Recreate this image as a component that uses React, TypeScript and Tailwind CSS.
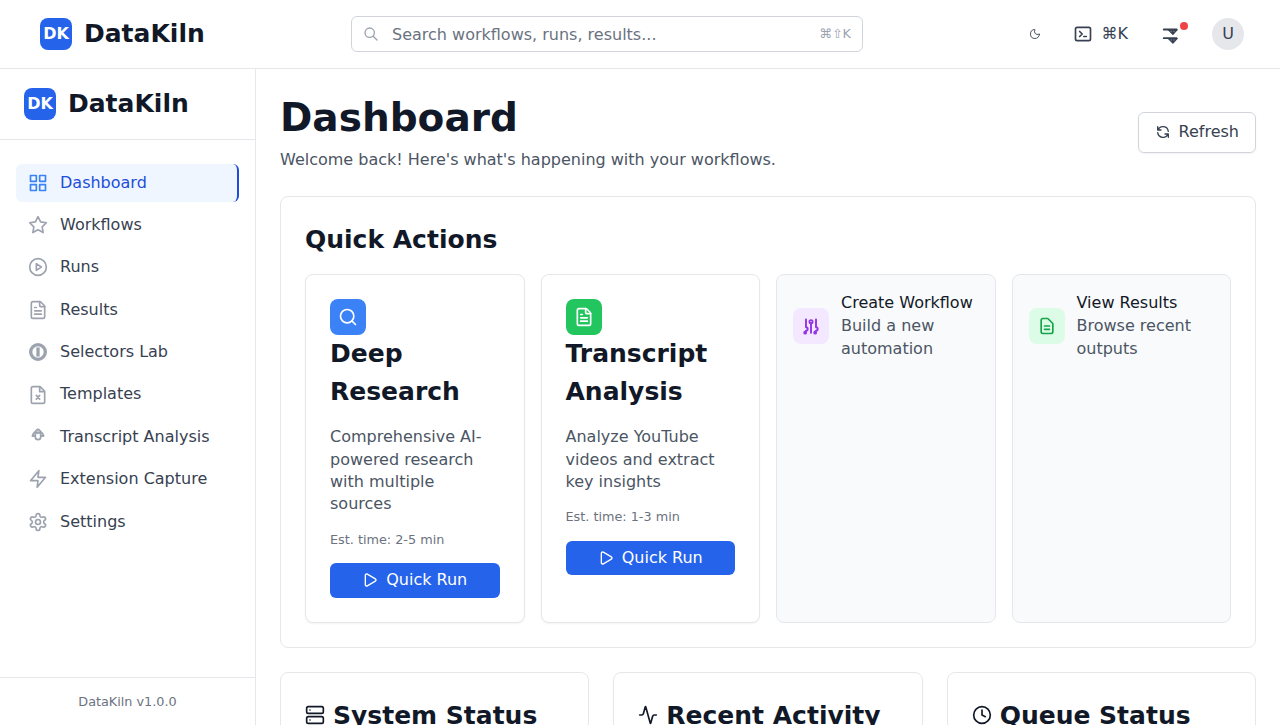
import type { ReactNode } from 'react';
import { Activity, Clock, FileText, Moon, Play, Search, Server } from 'lucide-react';

function Svg({ children, size = 20, sw = 2 }: { children: ReactNode; size?: number; sw?: number }) {
  return (
    <svg width={size} height={size} viewBox="0 0 24 24" fill="none" stroke="currentColor" strokeWidth={sw} strokeLinecap="round" strokeLinejoin="round" className="shrink-0">
      {children}
    </svg>
  );
}

const GridIcon = () => (
  <Svg>
    <path d="M3 3h7v7H3zM14 3h7v7h-7zM14 14h7v7h-7zM3 14h7v7H3z" />
  </Svg>
);
const StarIcon = () => (
  <Svg>
    <path d="M12 2l3.09 6.26L22 9.27l-5 4.87 1.18 6.88L12 17.77l-6.18 3.25L7 14.14 2 9.27l6.91-1.01z" />
  </Svg>
);
const RunsIcon = () => (
  <Svg>
    <circle cx="12" cy="12" r="10" />
    <path d="M10 8l6 4-6 4z" />
  </Svg>
);
const SelectorIcon = () => (
  <Svg>
    <circle cx="12" cy="12" r="8.8" strokeWidth="4" />
    <path d="M12 6.500v11" strokeWidth="4" strokeLinecap="butt" />
  </Svg>
);
const TemplateIcon = () => (
  <Svg>
    <path d="M14.5 2H6a2 2 0 0 0-2 2v16a2 2 0 0 0 2 2h12a2 2 0 0 0 2-2V7.5zM14 2v6h6M10 12.500l4 4.500M14 12.500l-4 4.500" />
  </Svg>
);
const TranscriptIcon = () => (
  <Svg>
    <path d="M8.300 7.500c0-3.500 1.500-5.200 3.700-5.200s3.700 1.700 3.700 5.200z" fill="currentColor" strokeWidth="1" />
    <path d="M8.500 6c-1.800 1.200-2.900 2.700-3.200 4.700h2.200M15.500 6c1.800 1.200 2.900 2.700 3.200 4.700h-2.200" strokeWidth="2.300" />
    <path d="M8.800 8v4a3.200 3.200 0 0 0 6.400 0V8" />
    <path d="M10.500 5h3" stroke="#ffffff" strokeWidth="0.700" />
  </Svg>
);
const ZapIcon = () => (
  <Svg>
    <path d="M13 2L3 14h9l-1 8 10-12h-9z" />
  </Svg>
);
const SettingsIcon = () => (
  <Svg>
    <path d="M12.22 2h-.44a2 2 0 0 0-2 2v.18a2 2 0 0 1-1 1.73l-.43.25a2 2 0 0 1-2 0l-.15-.08a2 2 0 0 0-2.73.73l-.22.38a2 2 0 0 0 .73 2.73l.15.1a2 2 0 0 1 1 1.72v.51a2 2 0 0 1-1 1.74l-.15.09a2 2 0 0 0-.73 2.73l.22.38a2 2 0 0 0 2.73.73l.15-.08a2 2 0 0 1 2 0l.43.25a2 2 0 0 1 1 1.73V20a2 2 0 0 0 2 2h.44a2 2 0 0 0 2-2v-.18a2 2 0 0 1 1-1.73l.43-.25a2 2 0 0 1 2 0l.15.08a2 2 0 0 0 2.73-.73l.22-.39a2 2 0 0 0-.73-2.73l-.15-.08a2 2 0 0 1-1-1.74v-.5a2 2 0 0 1 1-1.74l.15-.09a2 2 0 0 0 .73-2.73l-.22-.38a2 2 0 0 0-2.73-.73l-.15.08a2 2 0 0 1-2 0l-.43-.25a2 2 0 0 1-1-1.73V4a2 2 0 0 0-2-2z" />
    <circle cx="12" cy="12" r="3" />
  </Svg>
);
const FieldSearchIcon = () => (
  <Svg size={16}>
    <path d="M21 21l-6-6m2-5a7 7 0 11-14 0 7 7 0 0114 0z" />
  </Svg>
);
const RefreshIcon = () => (
  <Svg size={16}>
    <path d="M4 4v5h.582m15.356 2A8.001 8.001 0 004.582 9m0 0H9m11 11v-5h-.581m0 0a8.003 8.003 0 01-15.357-2m15.357 2H15" />
  </Svg>
);
const TerminalIcon = () => (
  <Svg>
    <path d="M8 9l3 3-3 3m5 0h3M5 20h14a2 2 0 002-2V6a2 2 0 00-2-2H5a2 2 0 00-2 2v12a2 2 0 002 2z" />
  </Svg>
);
const NotificationIcon = () => (
  <Svg>
    <path d="M4.500 6.600h15.500M4.500 17h15.500" strokeWidth="2.200" />
    <path d="M10 7h10.500l-5 5.500zM10 17.400h10.500l-5 5.500z" strokeWidth="1.400" fill="currentColor" />
    <path d="M13.400 8.800h.01M16.800 8.800h.01M13.400 19.200h.01M16.800 19.200h.01" stroke="#ffffff" strokeWidth="0.800" />
  </Svg>
);
const SlidersIcon = () => (
  <Svg>
    <path d="M6 4v9.500M6 13.500a2 2 0 1 1 0 4L5 20M12 8v12M18 4v9.500M18 13.500a2 2 0 1 1 0 4L17 20" strokeWidth="2.300" />
    <circle cx="12" cy="7" r="2" />
    <circle cx="5" cy="20" r="1" strokeWidth="2.500" />
    <circle cx="17" cy="20" r="1" strokeWidth="2.500" />
  </Svg>
);
const DocumentIcon = () => (
  <Svg>
    <path d="M9 12h6m-6 4h6m2 5H7a2 2 0 01-2-2V5a2 2 0 012-2h5.586a1 1 0 01.707.293l5.414 5.414a1 1 0 01.293.707V19a2 2 0 01-2 2z" />
  </Svg>
);

const navItems: { label: string; icon: ReactNode; active?: boolean }[] = [
  { label: 'Dashboard', icon: <GridIcon />, active: true },
  { label: 'Workflows', icon: <StarIcon /> },
  { label: 'Runs', icon: <RunsIcon /> },
  { label: 'Results', icon: <FileText size={20} /> },
  { label: 'Selectors Lab', icon: <SelectorIcon /> },
  { label: 'Templates', icon: <TemplateIcon /> },
  { label: 'Transcript Analysis', icon: <TranscriptIcon /> },
  { label: 'Extension Capture', icon: <ZapIcon /> },
  { label: 'Settings', icon: <SettingsIcon /> },
];

function Brand() {
  return (
    <div className="flex items-center gap-3">
      <div className="flex size-8 items-center justify-center rounded-lg bg-[#2563eb] font-bold text-white">DK</div>
      <span className="text-[25px] leading-[37.5px] font-bold">DataKiln</span>
    </div>
  );
}

function RunCard({ icon, tint, title, text, time }: { icon: ReactNode; tint: string; title: string; text: string; time: string }) {
  return (
    <article className="rounded-lg border border-[#e5e7eb] bg-white p-6 shadow-[0_1px_2px_rgba(0,0,0,0.05)]">
      <div className={`flex size-9 items-center justify-center rounded-lg text-white ${tint}`}>{icon}</div>
      <h3 className="mb-[15.800px] text-[25px] leading-[37.5px] font-bold">{title}</h3>
      <p className="mb-[15.100px] text-[#4b5563]">{text}</p>
      <p className="mb-[14.400px] text-[12.8px] leading-[18px] text-[#6b7280]">{time}</p>
      <button className="flex w-full items-center justify-center gap-2 rounded-md bg-[#2563eb] py-1.5 text-white">
        <Play size={16} />
        Quick Run
      </button>
    </article>
  );
}

function LinkCard({ icon, tint, title, text }: { icon: ReactNode; tint: string; title: string; text: string }) {
  return (
    <article className="rounded-lg border border-[#e5e7eb] bg-[#f9fafb] p-4">
      <div className="flex items-center gap-3">
        <div className={`flex size-9 shrink-0 items-center justify-center rounded-lg ${tint}`}>{icon}</div>
        <div>
          <p className="mb-[1.100px] pt-[0.500px] whitespace-nowrap">{title}</p>
          <p className="text-[#4b5563]">{text}</p>
        </div>
      </div>
    </article>
  );
}

function StatusCard({ icon, title }: { icon: ReactNode; title: string }) {
  return (
    <section className="h-[200px] rounded-lg border border-[#e5e7eb] bg-white p-6">
      <h2 className="flex items-center gap-2 text-[25px] leading-[37.5px] font-bold">
        {icon}
        {title}
      </h2>
    </section>
  );
}

export default function App() {
  return (
    <div className="flex h-[725px] flex-col overflow-hidden bg-white font-['DejaVu_Sans',sans-serif] text-base leading-[22.4px] text-[#111827]">
      <header className="flex h-[69px] shrink-0 items-center justify-between border-b border-[#e5e7eb] pr-9 pl-10">
        <div className="w-[311px] shrink-0">
          <Brand />
        </div>
        <div className="flex h-9 w-[512px] shrink-0 items-center rounded-md border border-[#d1d5db] pr-[11px] pl-[11px]">
          <span className="text-[#9ca3af]">
            <FieldSearchIcon />
          </span>
          <span className="ml-[13px] flex-1 pt-0.5 text-[#6b7280]">Search workflows, runs, results...</span>
          <span className="text-[12.8px] text-[#9ca3af]">⌘⇧K</span>
        </div>
        <div className="flex flex-1 items-center justify-end text-[#374151]">
          <Moon size={12} strokeWidth={1.8} />
          <div className="ml-8 flex items-center gap-[9px]">
            <TerminalIcon />
            <span>⌘K</span>
          </div>
          <div className="relative ml-8">
            <NotificationIcon />
            <span className="absolute -top-[2px] left-5 size-2 rounded-full bg-[#ef4444]" />
          </div>
          <div className="ml-8 flex size-8 items-center justify-center rounded-full bg-[#e5e7eb]">U</div>
        </div>
      </header>

      <div className="flex min-h-0 flex-1">
        <aside className="flex w-64 shrink-0 flex-col border-r border-[#e5e7eb]">
          <div className="border-b border-[#e5e7eb] px-6 py-4">
            <Brand />
          </div>
          <nav className="flex flex-1 flex-col gap-[3.970px] px-4 pt-6">
            {navItems.map((item) => (
              <a
                key={item.label}
                className={
                  item.active
                    ? 'flex items-center gap-3 rounded-md border-r-2 border-[#1d4ed8] bg-[#eff6ff] px-3 py-2 text-[#1d4ed8]'
                    : 'flex items-center gap-3 rounded-md px-3 py-2 text-[#374151]'
                }
              >
                <span className={item.active ? 'text-[#3b82f6]' : 'text-[#9ca3af]'}>{item.icon}</span>
                {item.label}
              </a>
            ))}
          </nav>
          <footer className="h-12 border-t border-[#e5e7eb] pt-[15px] text-center text-[12.8px] leading-[18px] text-[#6b7280]">DataKiln v1.0.0</footer>
        </aside>

        <main className="flex-1 overflow-hidden p-6">
          <div className="flex items-center justify-between">
            <div className="pb-[0.800px]">
              <h1 className="mb-[5.600px] text-[39px] leading-[50px] font-bold">Dashboard</h1>
              <p className="text-[#4b5563]">Welcome back! Here's what's happening with your workflows.</p>
            </div>
            <button className="flex items-center gap-2 rounded-md border border-[#d1d5db] px-4 py-2 text-[#374151] shadow-[0_1px_2px_rgba(0,0,0,0.05)]">
              <RefreshIcon />
              Refresh
            </button>
          </div>

          <section className="mt-6 rounded-lg border border-[#e5e7eb] p-6">
            <h2 className="mb-4 text-[25px] leading-[37.5px] font-bold">Quick Actions</h2>
            <div className="grid grid-cols-4 gap-4">
              <RunCard
                icon={<Search size={20} />}
                tint="bg-[#3b82f6]"
                title="Deep Research"
                text="Comprehensive AI-powered research with multiple sources"
                time="Est. time: 2-5 min"
              />
              <RunCard
                icon={<FileText size={20} />}
                tint="bg-[#22c55e]"
                title="Transcript Analysis"
                text="Analyze YouTube videos and extract key insights"
                time="Est. time: 1-3 min"
              />
              <LinkCard icon={<SlidersIcon />} tint="bg-[#f3e8ff] text-[#9333ea]" title="Create Workflow" text="Build a new automation" />
              <LinkCard icon={<DocumentIcon />} tint="bg-[#dcfce7] text-[#16a34a]" title="View Results" text="Browse recent outputs" />
            </div>
          </section>

          <div className="mt-6 grid grid-cols-3 gap-6">
            <StatusCard icon={<Server size={20} />} title="System Status" />
            <StatusCard icon={<Activity size={20} />} title="Recent Activity" />
            <StatusCard icon={<Clock size={20} />} title="Queue Status" />
          </div>
        </main>
      </div>
    </div>
  );
}
